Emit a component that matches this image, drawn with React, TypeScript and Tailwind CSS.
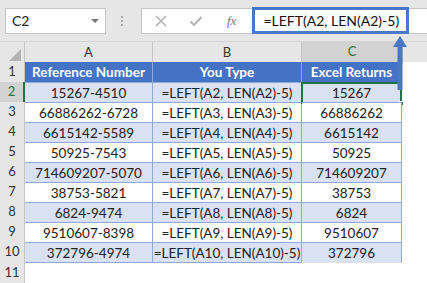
import React from 'react';

const rows = [
  ['15267-4510', '=LEFT(A2, LEN(A2)-5)', '15267'],
  ['66886262-6728', '=LEFT(A3, LEN(A3)-5)', '66886262'],
  ['6615142-5589', '=LEFT(A4, LEN(A4)-5)', '6615142'],
  ['50925-7543', '=LEFT(A5, LEN(A5)-5)', '50925'],
  ['714609207-5070', '=LEFT(A6, LEN(A6)-5)', '714609207'],
  ['38753-5821', '=LEFT(A7, LEN(A7)-5)', '38753'],
  ['6824-9474', '=LEFT(A8, LEN(A8)-5)', '6824'],
  ['9510607-8398', '=LEFT(A9, LEN(A9)-5)', '9510607'],
  ['372796-4974', '=LEFT(A10, LEN(A10)-5)', '372796'],
];

const font = { fontFamily: 'Lato, "Open Sans", sans-serif' };

export default function App() {
  return (
    <div className="relative w-[427px] h-[283px] overflow-hidden bg-white text-[#222]" style={font}>
      {/* formula bar */}
      <div className="flex items-center h-[42px] bg-[#e6e6e6] border-b border-[#d4d4d4] pl-[5px]">
        <div className="flex items-center justify-between w-[101px] h-[26px] bg-white border border-[#c6c6c6] pl-[6px] pr-[6px]">
          <span className="text-[14px] text-[#222]">C2</span>
          <span className="w-0 h-0 border-l-[4px] border-r-[4px] border-t-[4px] border-l-transparent border-r-transparent border-t-[#777]" />
        </div>
        <div className="flex flex-col gap-[2px] ml-[15px] mr-[18px]">
          <span className="w-[2px] h-[2px] bg-[#aaa]" />
          <span className="w-[2px] h-[2px] bg-[#aaa]" />
          <span className="w-[2px] h-[2px] bg-[#aaa]" />
        </div>
        <div className="flex items-center flex-1 h-[26px] bg-white border border-[#c6c6c6] border-r-0">
          <svg width="14" height="14" viewBox="0 0 14 14" className="ml-[12px]">
            <path d="M2 2 L12 12 M12 2 L2 12" stroke="#b5b5b5" strokeWidth="1.6" />
          </svg>
          <svg width="14" height="14" viewBox="0 0 14 14" className="ml-[21px]">
            <path d="M1.5 7.5 L5 11 L12.5 3" stroke="#b5b5b5" strokeWidth="2" fill="none" />
          </svg>
          <span className="ml-[24px] text-[13px] italic text-[#777]" style={{ fontFamily: '"Liberation Serif", serif' }}>
            fx
          </span>
          <div className="ml-[16px] flex items-center h-[27px] w-[157px] border-[3px] border-[#4a78c6] pl-[8px] text-[14px] text-[#111] whitespace-nowrap">
            =LEFT(A2, LEN(A2)-5)
          </div>
        </div>
      </div>

      {/* column headers */}
      <div className="grid grid-cols-[25px_128px_149px_100px_1fr] h-[20px] bg-[#e6e6e6] text-[13px] text-[#333]">
        <div className="relative border-r border-[#c6c6c6]">
          <span className="absolute right-[3px] bottom-[3px] w-0 h-0" style={{ borderBottom: '12px solid #b4b4b4', borderLeft: '12px solid transparent' }} />
        </div>
        <div className="flex items-center justify-center border-r border-[#c6c6c6]">A</div>
        <div className="flex items-center justify-center border-r border-[#c6c6c6]">B</div>
        <div className="flex items-center justify-center bg-[#d2d2d2] border-b-2 border-[#217346] text-[#217346]">C</div>
        <div className="border-l border-[#c6c6c6]" />
      </div>

      {/* row 1 headers */}
      <div className="grid grid-cols-[25px_128px_149px_100px_1fr] h-[20px] text-[13.5px]">
        <div className="flex items-center justify-center bg-[#e6e6e6] border-r border-b border-[#c6c6c6] text-[13px] text-[#333]">1</div>
        <div className="flex items-center justify-center bg-[#4472c4] text-white font-bold border-r border-[#8ea9db]">Reference Number</div>
        <div className="flex items-center justify-center bg-[#4472c4] text-white font-bold border-r border-[#8ea9db]">You Type</div>
        <div className="flex items-center justify-center bg-[#4472c4] text-white font-bold border-r border-[#8ea9db]">Excel Returns</div>
        <div />
      </div>

      {rows.map((r, i) => {
        const n = i + 2;
        const shade = n % 2 === 0 ? 'bg-[#d9e1f2]' : 'bg-white';
        const sel = n === 2;
        return (
          <div key={n} className="grid grid-cols-[25px_128px_149px_100px_1fr] h-[20px] text-[13.5px]">
            <div className={`flex items-center justify-center border-b border-[#c6c6c6] text-[13px] ${sel ? 'bg-[#d2d2d2] text-[#217346] border-r-2 border-r-[#217346]' : 'bg-[#e6e6e6] text-[#333] border-r border-r-[#c6c6c6]'}`}>{n}</div>
            <div className={`flex items-center justify-center border-r border-t border-[#8ea9db] ${shade}`}>{r[0]}</div>
            <div className={`flex items-center justify-center whitespace-nowrap border-r border-t border-[#8ea9db] ${shade}`}>{r[1]}</div>
            <div className={`relative flex items-center justify-center border-r border-t border-[#8ea9db] ${shade}`}>
              {r[2]}
              {sel && (
                <>
                  <span className="absolute -inset-[1px] border-2 border-[#217346]" />
                  <span className="absolute -right-[3px] -bottom-[3px] w-[5px] h-[5px] bg-[#217346] border border-white" />
                </>
              )}
            </div>
            <div />
          </div>
        );
      })}

      {/* row 11 */}
      <div className="grid grid-cols-[25px_128px_149px_100px_1fr] h-[21px]">
        <div className="flex items-center justify-center bg-[#e6e6e6] border-r border-[#c6c6c6] text-[13px] text-[#333]">11</div>
        <div className="col-span-3 border-t border-[#8ea9db]" />
        <div />
      </div>

      {/* arrow */}
      <svg className="absolute left-[392px] top-[36px]" width="16" height="54" viewBox="0 0 16 54">
        <path d="M8 0 L15 11 L10.5 11 L10.5 54 L5.5 54 L5.5 11 L1 11 Z" fill="#4a78c6" />
      </svg>
    </div>
  );
}
